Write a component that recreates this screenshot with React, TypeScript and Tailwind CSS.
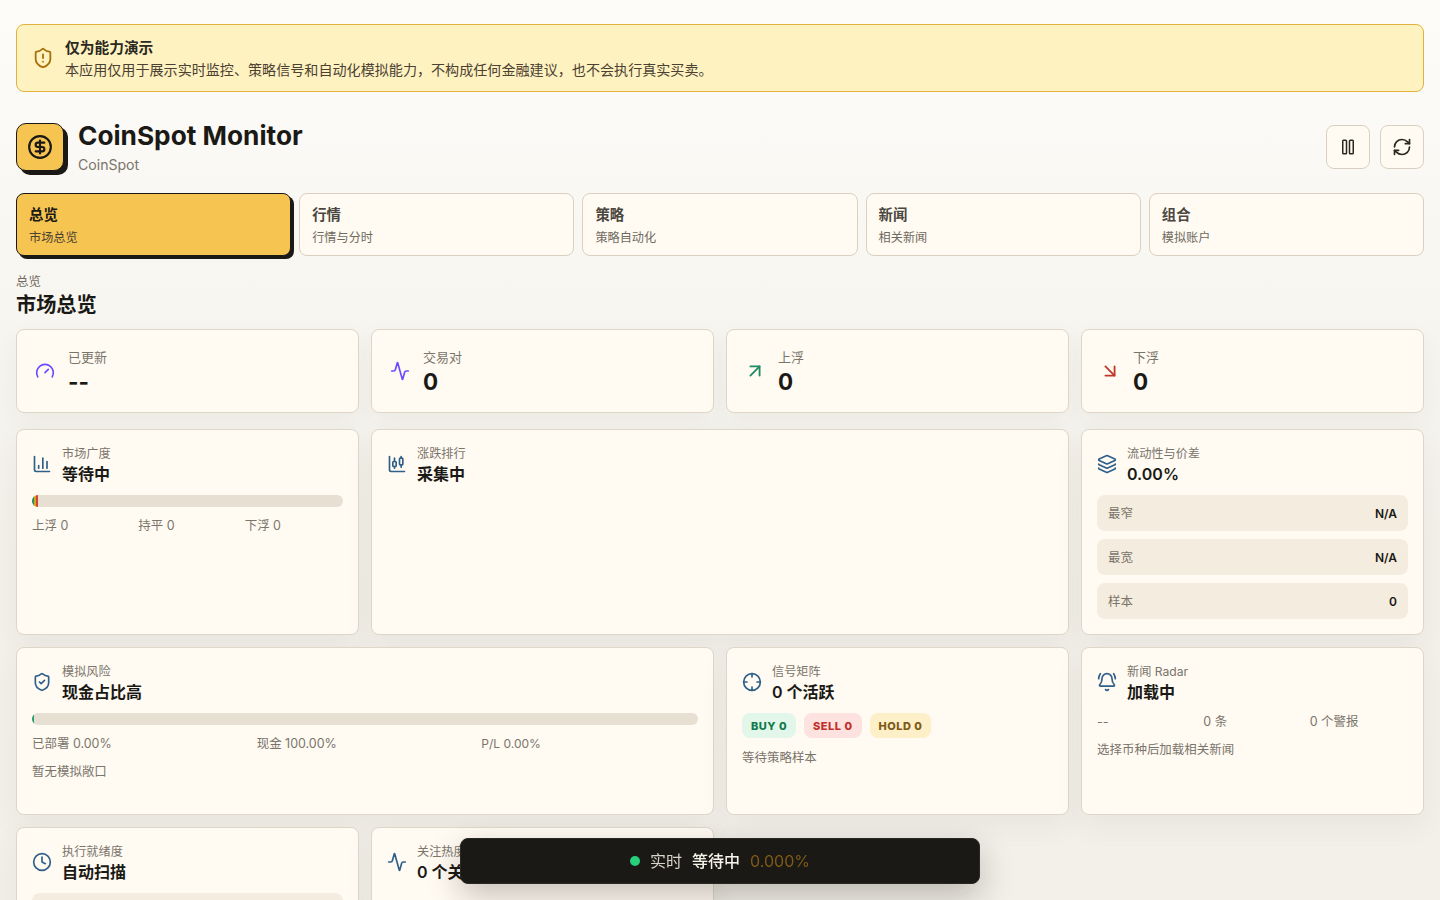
import { Gauge, Activity, ArrowUpRight, ArrowDownRight, ChartColumn, ChartCandlestick, Layers, ShieldCheck, Crosshair, BellRing, Clock, CircleDollarSign, Pause, RefreshCw, ShieldAlert } from "lucide-react";
import type { ReactNode } from "react";

const font = "font-['Inter','Noto_Sans_CJK_SC',sans-serif]";

function Tab({ title, sub, active }: { title: string; sub: string; active?: boolean }) {
  return (
    <div className={active
      ? "h-[63px] rounded-lg border border-[#1a1915] bg-[#f5c451] px-3 pt-[11px] shadow-[3px_3px_0_#1a1915]"
      : "h-[63px] rounded-lg border border-[#d9d0c1] bg-[#fffaf2] px-3 pt-[11px]"}>
      <div className={active ? "text-[14.4px] font-semibold leading-5 text-[#1a1915]" : "text-[14.4px] font-semibold leading-5 text-[#4b4740]"}>{title}</div>
      <div className={active ? "mt-[5px] text-[12.16px] leading-4 text-[#4b4032]" : "mt-[5px] text-[12.16px] leading-4 text-[#6f6a60]"}>{sub}</div>
    </div>
  );
}

function Stat({ icon, label, value }: { icon: ReactNode; label: string; value: string }) {
  return (
    <div className="flex h-[84px] items-center gap-[11px] rounded-lg border border-[#ded6c8] bg-[#fffaf2] pl-4 shadow-[0_8px_24px_rgba(60,50,30,0.05)]">
      <div className="flex w-[24px] justify-center">{icon}</div>
      <div className="pt-[2px]">
        <div className="text-[13px] leading-5 text-[#7a756b]">{label}</div>
        <div className="text-[22.4px] font-bold leading-[30px] text-[#1a1915]">{value}</div>
      </div>
    </div>
  );
}

function Head({ icon, label, value }: { icon: ReactNode; label: string; value: string }) {
  return (
    <div className="flex items-center gap-[10px]">
      <div className="-mt-[4px] flex w-5 justify-center text-[#2f5f8a]">{icon}</div>
      <div>
        <div className="text-[12.16px] leading-4 text-[#7a756b]">{label}</div>
        <div className="text-base font-semibold leading-6 text-[#1a1915]">{value}</div>
      </div>
    </div>
  );
}

function Card({ className, children }: { className: string; children?: ReactNode }) {
  return (
    <div className={`rounded-lg border border-[#ded6c8] bg-[#fffaf2] px-[15px] pt-4 shadow-[0_10px_30px_rgba(60,50,30,0.06)] ${className}`}>
      {children}
    </div>
  );
}

function Row({ label, value }: { label: string; value: string }) {
  return (
    <div className="flex h-9 items-center justify-between rounded-lg bg-[#f4ecdf] px-[11px] pt-[2px] text-[12.48px]">
      <span className="text-[#7a756b]">{label}</span>
      <span className="text-xs font-semibold text-[#1a1915]">{value}</span>
    </div>
  );
}

export default function App() {
  return (
    <div className={`${font} min-h-screen bg-gradient-to-b from-[#fdfcf9] via-[#f3f1ea] to-[#f1efe8] px-4 pb-16 pt-6`}>
      <div className="flex h-[68px] items-center gap-[11px] rounded-lg border border-[#e3b23c] bg-[#fef2c0] px-[15px]">
        <ShieldAlert size={22} strokeWidth={2} className="text-[#a8720a]" />
        <div className="pt-[2px]">
          <div className="text-[14.72px] font-semibold leading-[22px] text-[#2b2820]">仅为能力演示</div>
          <div className="text-[14.08px] leading-[22px] text-[#4b4032]">本应用仅用于展示实时监控、策略信号和自动化模拟能力，不构成任何金融建议，也不会执行真实买卖。</div>
        </div>
      </div>

      <header className="mt-[31px] flex h-[50px] items-start justify-between">
        <div className="flex items-start gap-[14px]">
          <div className="flex h-[48px] w-[48px] items-center justify-center rounded-[10px] border border-[#1a1915] bg-[#f5c451] shadow-[4px_4px_0_#1a1915]">
            <CircleDollarSign size={26} strokeWidth={2} className="text-[#1a1915]" />
          </div>
          <div>
            <div className="-mt-[2px] text-[26.24px] font-bold leading-[30px] text-[#1a1915]">CoinSpot Monitor</div>
            <div className="mt-[4px] text-[14.08px] leading-5 text-[#7a756b]">CoinSpot</div>
          </div>
        </div>
        <div className="mt-[2px] flex gap-[10px]">
          <div className="flex h-11 w-11 items-center justify-center rounded-lg border border-[#d9d0c1] bg-[#fffaf2]"><Pause size={18} className="text-[#2b2820]" /></div>
          <div className="flex h-11 w-11 items-center justify-center rounded-lg border border-[#d9d0c1] bg-[#fffaf2]"><RefreshCw size={20} className="text-[#2b2820]" /></div>
        </div>
      </header>

      <nav className="mt-5 grid grid-cols-5 gap-2">
        <Tab active title="总览" sub="市场总览" />
        <Tab title="行情" sub="行情与分时" />
        <Tab title="策略" sub="策略自动化" />
        <Tab title="新闻" sub="相关新闻" />
        <Tab title="组合" sub="模拟账户" />
      </nav>

      <div className="mt-[18px] text-[12.48px] leading-4 text-[#6f6a60]">总览</div>
      <h2 className="mt-[1px] text-[20.16px] font-semibold leading-7 text-[#1a1915]">市场总览</h2>

      <div className="mt-[10px] grid grid-cols-4 gap-3">
        <Stat icon={<Gauge size={20} className="text-[#6d4aff]" />} label="已更新" value="--" />
        <Stat icon={<Activity size={20} className="text-[#6d4aff]" />} label="交易对" value="0" />
        <Stat icon={<ArrowUpRight size={22} className="text-[#1f8a63]" />} label="上浮" value="0" />
        <Stat icon={<ArrowDownRight size={22} className="text-[#c0392b]" />} label="下浮" value="0" />
      </div>

      <div className="mt-4 grid grid-cols-4 gap-3">
        <Card className="h-[206px]">
          <Head icon={<ChartColumn size={20} />} label="市场广度" value="等待中" />
          <div className="mt-[9px] flex h-3 overflow-hidden rounded-full bg-[#e7dfd2]">
            <div className="w-[2px] bg-[#1f8a63]" />
            <div className="w-[2px] bg-[#d9a21b]" />
            <div className="w-[2px] bg-[#d04437]" />
          </div>
          <div className="mt-[11px] grid grid-cols-3 gap-2 text-[12.48px] leading-4 text-[#7a756b]">
            <span>上浮 0</span><span>持平 0</span><span>下浮 0</span>
          </div>
        </Card>
        <Card className="col-span-2 h-[206px]">
          <Head icon={<ChartCandlestick size={20} />} label="涨跌排行" value="采集中" />
        </Card>
        <Card className="h-[206px]">
          <Head icon={<Layers size={20} />} label="流动性与价差" value="0.00%" />
          <div className="mt-[9px] flex flex-col gap-2">
            <Row label="最窄" value="N/A" />
            <Row label="最宽" value="N/A" />
            <Row label="样本" value="0" />
          </div>
        </Card>
      </div>

      <div className="mt-3 grid grid-cols-4 gap-3">
        <Card className="col-span-2 h-[168px]">
          <Head icon={<ShieldCheck size={20} />} label="模拟风险" value="现金占比高" />
          <div className="mt-[9px] h-3 overflow-hidden rounded-full bg-[#e7dfd2]">
            <div className="h-3 w-[2px] bg-[#1f9d6c]" />
          </div>
          <div className="mt-[11px] grid grid-cols-3 gap-2 text-[12.48px] leading-4 text-[#7a756b]">
            <span>已部署 0.00%</span><span>现金 100.00%</span><span className="text-xs">P/L 0.00%</span>
          </div>
          <div className="mt-3 text-[12.48px] leading-4 text-[#7a756b]">暂无模拟敞口</div>
        </Card>
        <Card className="h-[168px]">
          <Head icon={<Crosshair size={20} />} label="信号矩阵" value="0 个活跃" />
          <div className="mt-[9px] flex gap-2 text-[11px] font-extrabold leading-6 tracking-[0.5px]">
            <span className="rounded-lg bg-[#e2f6ea] px-[9px] pt-[1px] text-[#117a4d]">BUY 0</span>
            <span className="rounded-lg bg-[#fde2e0] px-[9px] pt-[1px] text-[#c22f2a]">SELL 0</span>
            <span className="rounded-lg bg-[#fdefc8] px-[9px] pt-[1px] text-[#7f5a14]">HOLD 0</span>
          </div>
          <div className="mt-[12px] text-[12.48px] leading-4 text-[#7a756b]">等待策略样本</div>
        </Card>
        <Card className="h-[168px]">
          <Head icon={<BellRing size={20} />} label="新闻 Radar" value="加载中" />
          <div className="mt-[10px] grid grid-cols-3 gap-2 text-[12.48px] leading-4 text-[#7a756b]">
            <span>--</span><span>0 条</span><span>0 个警报</span>
          </div>
          <div className="mt-3 text-[12.48px] leading-4 text-[#7a756b]">选择币种后加载相关新闻</div>
        </Card>
      </div>

      <div className="mt-3 grid grid-cols-4 gap-3">
        <Card className="h-[168px]">
          <Head icon={<Clock size={20} />} label="执行就绪度" value="自动扫描" />
          <div className="mt-[9px] flex flex-col gap-2">
            <Row label="下次扫描" value="N/A" />
          </div>
        </Card>
        <Card className="h-[168px]">
          <Head icon={<Activity size={20} />} label="关注热度" value="0 个关注" />
        </Card>
      </div>

      <div className="fixed bottom-4 left-1/2 flex h-[46px] w-[520px] -translate-x-1/2 items-center justify-center gap-[10px] rounded-lg border border-[#2b2820] bg-[#1a1915] text-base shadow-[0_12px_32px_rgba(30,25,15,0.25)]">
        <span className="h-[10px] w-[10px] rounded-full bg-[#27cf7c]" />
        <span className="text-[#d8d3c8]">实时</span>
        <span className="font-medium text-[#f5f2ea]">等待中</span>
        <span className="text-[#7f5a14]">0.000%</span>
      </div>
    </div>
  );
}
